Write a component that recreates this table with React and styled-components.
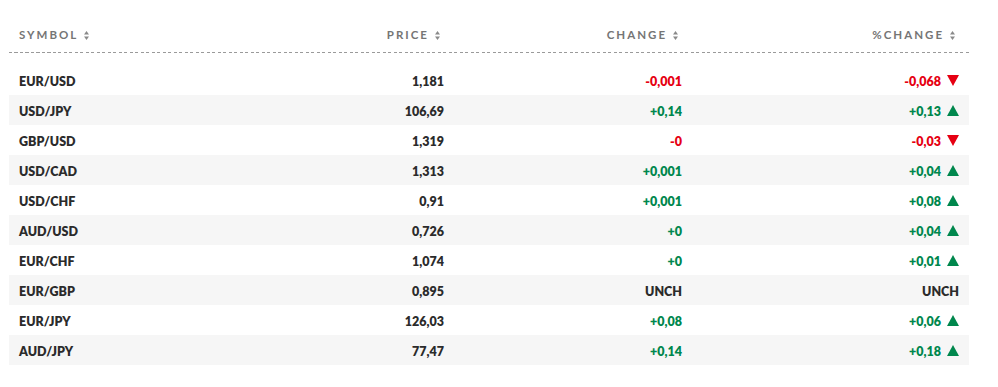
import React from "react";
import styled, { createGlobalStyle } from "styled-components";

const Global = createGlobalStyle`
  html, body { margin: 0; padding: 0; background: #fff; }
  body { font-family: "Lato", "Open Sans", sans-serif; -webkit-font-smoothing: antialiased; }
`;

const Wrap = styled.div`
  padding: 9px 29px 0 9px;
`;

const Table = styled.div`
  width: 960px;
`;

const Cols = `
  display: grid;
  grid-template-columns: 205px 240px 238px 277px;
`;

const HeadRow = styled.div`
  ${Cols}
  height: 44px;
  align-items: end;
  box-sizing: border-box;
  padding-bottom: 11px;
  background-image: repeating-linear-gradient(to right, #9a9a9a 0 3px, transparent 3px 5.5px);
  background-size: 100% 1px;
  background-repeat: no-repeat;
  background-position: left bottom;
  margin-bottom: 12px;
`;

const HeadCell = styled.div`
  display: flex;
  align-items: center;
  justify-content: ${(p) => (p.$left ? "flex-start" : "flex-end")};
  padding: ${(p) => (p.$left ? "0 0 0 10px" : "0 14px 0 0")};
  font-size: 11.5px;
  line-height: 14px;
  font-weight: 700;
  letter-spacing: 2px;
  color: #757575;
`;

const SortIcon = styled.svg`
  width: 5px;
  height: 9px;
  margin-left: 6px;
  flex: none;
`;

const Row = styled.div`
  ${Cols}
  height: 30px;
  box-sizing: border-box;
  padding-top: 2px;
  align-items: center;
  background: ${(p) => (p.$alt ? "#f6f6f6" : "#fff")};
`;

const Cell = styled.div`
  display: flex;
  align-items: center;
  justify-content: ${(p) => (p.$left ? "flex-start" : "flex-end")};
  padding: ${(p) => (p.$left ? "0 0 0 10px" : "0 10px 0 0")};
  font-size: 12.5px;
  font-weight: 800;
  color: ${(p) =>
    p.$tone === "down" ? "#e60012" : p.$tone === "up" ? "#00874d" : "#2b2b2b"};
`;

const Tri = styled.svg`
  width: 12px;
  height: 11px;
  margin-left: 6px;
  margin-top: -2px;
  flex: none;
`;

const Sort = () => (
  <SortIcon viewBox="0 0 5 9">
    <path d="M2.5 0 L5 3.5 L0 3.5 Z" fill="#8a8a8a" />
    <path d="M0 5.5 L5 5.5 L2.5 9 Z" fill="#8a8a8a" />
  </SortIcon>
);

const Arrow = ({ dir }) =>
  dir === "down" ? (
    <Tri viewBox="0 0 12 11">
      <path d="M0 0 H12 L6 11 Z" fill="#e60012" />
    </Tri>
  ) : (
    <Tri viewBox="0 0 12 11">
      <path d="M6 0 L12 11 H0 Z" fill="#00874d" />
    </Tri>
  );

const data = [
  ["EUR/USD", "1,181", "-0,001", "-0,068"],
  ["USD/JPY", "106,69", "+0,14", "+0,13"],
  ["GBP/USD", "1,319", "-0", "-0,03"],
  ["USD/CAD", "1,313", "+0,001", "+0,04"],
  ["USD/CHF", "0,91", "+0,001", "+0,08"],
  ["AUD/USD", "0,726", "+0", "+0,04"],
  ["EUR/CHF", "1,074", "+0", "+0,01"],
  ["EUR/GBP", "0,895", "UNCH", "UNCH"],
  ["EUR/JPY", "126,03", "+0,08", "+0,06"],
  ["AUD/JPY", "77,47", "+0,14", "+0,18"],
];

const tone = (v) => (v.startsWith("-") ? "down" : v.startsWith("+") ? "up" : "flat");

export default function App() {
  return (
    <>
      <Global />
      <Wrap>
        <Table>
          <HeadRow>
            <HeadCell $left>SYMBOL<Sort /></HeadCell>
            <HeadCell>PRICE<Sort /></HeadCell>
            <HeadCell>CHANGE<Sort /></HeadCell>
            <HeadCell>%CHANGE<Sort /></HeadCell>
          </HeadRow>
          {data.map(([s, p, c, pc], i) => (
            <Row key={s} $alt={i % 2 === 1}>
              <Cell $left>{s}</Cell>
              <Cell>{p}</Cell>
              <Cell $tone={tone(c)}>{c}</Cell>
              <Cell $tone={tone(pc)}>
                {pc}
                {tone(pc) !== "flat" && <Arrow dir={tone(pc)} />}
              </Cell>
            </Row>
          ))}
        </Table>
      </Wrap>
    </>
  );
}
